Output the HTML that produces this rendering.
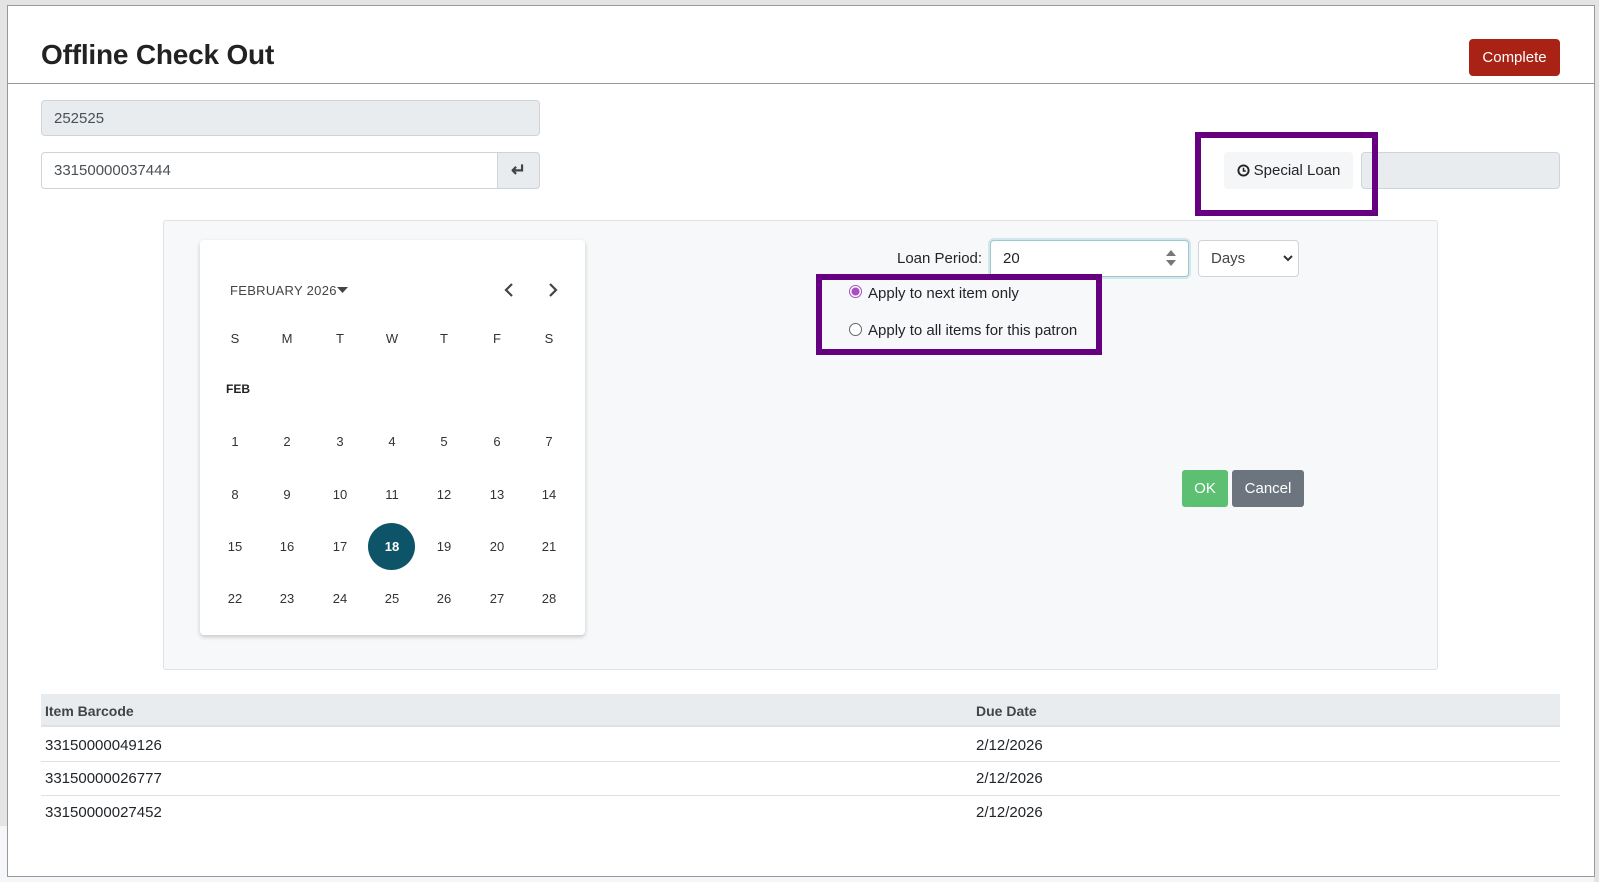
<!DOCTYPE html>
<html><head><style>
*{box-sizing:border-box;margin:0;padding:0}
body{width:1599px;height:882px;background:#f5f6fa;position:relative;overflow:hidden;font-family:"Liberation Sans",sans-serif;color:#212529}
.a{position:absolute}
.gray{background:#e4e4e4}
.inp{position:absolute;border:1px solid #ced4da;border-radius:4px;font-size:15px;padding-left:12px;display:flex;align-items:center}
.d{position:absolute;width:40px;text-align:center;font-size:13px;color:#333;transform:translate(-20px,-8px)}
.pb{position:absolute;border:6px solid #660080}
</style></head><body>
<div class="a gray" style="left:0;top:0;width:1599px;height:5px"></div>
<div class="a gray" style="left:0;top:0;width:7px;height:826px"></div>
<div class="a gray" style="left:1594px;top:0;width:5px;height:882px"></div>
<div class="a" style="left:7px;top:5px;width:1588px;height:872px;background:#fff;border:1px solid #999"></div>
<div class="a" style="left:41px;top:39px;font-size:28px;font-weight:bold;color:#222;letter-spacing:-0.2px">Offline Check Out</div>
<div class="a" style="left:8px;top:83px;width:1586px;height:1px;background:#999"></div>
<div class="a" style="left:1469px;top:39px;width:91px;height:37px;background:#a82315;border-radius:4px;color:#fff;font-size:15px;display:flex;align-items:center;justify-content:center">Complete</div>
<div class="inp" style="left:41px;top:100px;width:499px;height:36px;background:#e9ecef;color:#495057">252525</div>
<div class="inp" style="left:41px;top:152px;width:499px;height:37px;background:#fff;color:#495057">33150000037444</div>
<div class="a" style="left:497px;top:152px;width:43px;height:37px;background:#e9ecef;border:1px solid #ced4da;border-radius:0 4px 4px 0;display:flex;align-items:center;justify-content:center;font-size:18px;font-weight:bold;color:#444">↵</div>
<div class="a" style="left:1224px;top:152px;width:129px;height:37px;background:#f5f6f8;border-radius:4px;font-size:15px;display:flex;align-items:center;justify-content:center;gap:4px"><svg width="13" height="13" viewBox="0 0 14 14"><circle cx="7" cy="7" r="5.5" fill="none" stroke="#222" stroke-width="2"/><path d="M7 4v3.5h2.5" fill="none" stroke="#222" stroke-width="1.6"/></svg>Special Loan</div>
<div class="a" style="left:1361px;top:152px;width:199px;height:37px;background:#e9ecef;border:1px solid #ced4da;border-radius:4px"></div>
<div class="pb" style="left:1195px;top:132px;width:183px;height:84px"></div>
<div class="a" style="left:163px;top:220px;width:1275px;height:450px;background:#f7f8fa;border:1px solid #dee2e6;border-radius:3px"></div>
<div class="a" style="left:200px;top:240px;width:385px;height:395px;background:#fff;box-shadow:0 2px 4px rgba(0,0,0,.2);border-radius:4px"></div>
<div class="a" style="left:230px;top:283px;font-size:13px;color:#444;letter-spacing:.3px">FEBRUARY 2026</div>
<svg class="a" style="left:337px;top:287px" width="12" height="7"><path d="M0 0h11L5.5 6z" fill="#444"/></svg>
<svg class="a" style="left:503px;top:282px" width="12" height="16"><path d="M9 2L3 8l6 6" fill="none" stroke="#444" stroke-width="2.2"/></svg>
<svg class="a" style="left:547px;top:282px" width="12" height="16"><path d="M3 2l6 6-6 6" fill="none" stroke="#444" stroke-width="2.2"/></svg>
<div class="d" style="left:235px;top:339px">S</div><div class="d" style="left:287px;top:339px">M</div><div class="d" style="left:340px;top:339px">T</div><div class="d" style="left:392px;top:339px">W</div><div class="d" style="left:444px;top:339px">T</div><div class="d" style="left:497px;top:339px">F</div><div class="d" style="left:549px;top:339px">S</div>
<div class="a" style="left:226px;top:382px;font-size:12px;font-weight:bold;color:#222">FEB</div>
<div class="a" style="left:368px;top:523px;width:47px;height:47px;border-radius:50%;background:#0e5468"></div>
<div class="d" style="left:235px;top:442px">1</div><div class="d" style="left:287px;top:442px">2</div><div class="d" style="left:340px;top:442px">3</div><div class="d" style="left:392px;top:442px">4</div><div class="d" style="left:444px;top:442px">5</div><div class="d" style="left:497px;top:442px">6</div><div class="d" style="left:549px;top:442px">7</div>
<div class="d" style="left:235px;top:495px">8</div><div class="d" style="left:287px;top:495px">9</div><div class="d" style="left:340px;top:495px">10</div><div class="d" style="left:392px;top:495px">11</div><div class="d" style="left:444px;top:495px">12</div><div class="d" style="left:497px;top:495px">13</div><div class="d" style="left:549px;top:495px">14</div>
<div class="d" style="left:235px;top:547px">15</div><div class="d" style="left:287px;top:547px">16</div><div class="d" style="left:340px;top:547px">17</div><div class="d" style="left:392px;top:547px;color:#fff;font-weight:bold">18</div><div class="d" style="left:444px;top:547px">19</div><div class="d" style="left:497px;top:547px">20</div><div class="d" style="left:549px;top:547px">21</div>
<div class="d" style="left:235px;top:599px">22</div><div class="d" style="left:287px;top:599px">23</div><div class="d" style="left:340px;top:599px">24</div><div class="d" style="left:392px;top:599px">25</div><div class="d" style="left:444px;top:599px">26</div><div class="d" style="left:497px;top:599px">27</div><div class="d" style="left:549px;top:599px">28</div>
<div class="a" style="left:897px;top:250px;font-size:15px">Loan Period:</div>
<div class="inp" style="left:990px;top:240px;width:199px;height:37px;background:#fff;border:1px solid #9cc8d0;box-shadow:0 0 0 2px #d3e6ea">20</div>
<svg class="a" style="left:1165px;top:248px" width="12" height="20"><path d="M1 8L6 2l5 6zM1 12l5 6 5-6z" fill="#777"/></svg>
<div class="inp" style="left:1198px;top:240px;width:101px;height:37px;background:#fff;color:#444">Days</div>
<svg class="a" style="left:1283px;top:254px" width="10" height="8"><path d="M1 2l4 4 4-4" fill="none" stroke="#333" stroke-width="2"/></svg>
<div class="a" style="left:849px;top:285px;width:13px;height:13px;border-radius:50%;border:1px solid #a64fc0;background:radial-gradient(circle,#a64fc0 0 3.6px,#fff 4.4px)"></div>
<div class="a" style="left:868px;top:285px;font-size:15px">Apply to next item only</div>
<div class="a" style="left:849px;top:323px;width:13px;height:13px;border-radius:50%;border:1px solid #666;background:#fff"></div>
<div class="a" style="left:868px;top:322px;font-size:15px">Apply to all items for this patron</div>
<div class="pb" style="left:816px;top:274px;width:286px;height:81px"></div>
<div class="a" style="left:1182px;top:470px;width:46px;height:37px;background:#5cbf72;border-radius:3px;color:#fff;font-size:15px;display:flex;align-items:center;justify-content:center">OK</div>
<div class="a" style="left:1232px;top:470px;width:72px;height:37px;background:#6c757d;border-radius:3px;color:#fff;font-size:15px;display:flex;align-items:center;justify-content:center">Cancel</div>
<div class="a" style="left:41px;top:694px;width:1519px;height:33px;background:#e9ecef;border-bottom:2px solid #dee2e6"></div>
<div class="a" style="left:45px;top:703px;font-size:14px;font-weight:bold;color:#444">Item Barcode</div>
<div class="a" style="left:976px;top:703px;font-size:14px;font-weight:bold;color:#444">Due Date</div>
<div class="a" style="left:41px;top:761px;width:1519px;height:1px;background:#dee2e6"></div>
<div class="a" style="left:41px;top:795px;width:1519px;height:1px;background:#dee2e6"></div>
<div class="a" style="left:45px;top:737px;font-size:15px">33150000049126</div><div class="a" style="left:976px;top:737px;font-size:15px">2/12/2026</div>
<div class="a" style="left:45px;top:770px;font-size:15px">33150000026777</div><div class="a" style="left:976px;top:770px;font-size:15px">2/12/2026</div>
<div class="a" style="left:45px;top:804px;font-size:15px">33150000027452</div><div class="a" style="left:976px;top:804px;font-size:15px">2/12/2026</div>
</body></html>
